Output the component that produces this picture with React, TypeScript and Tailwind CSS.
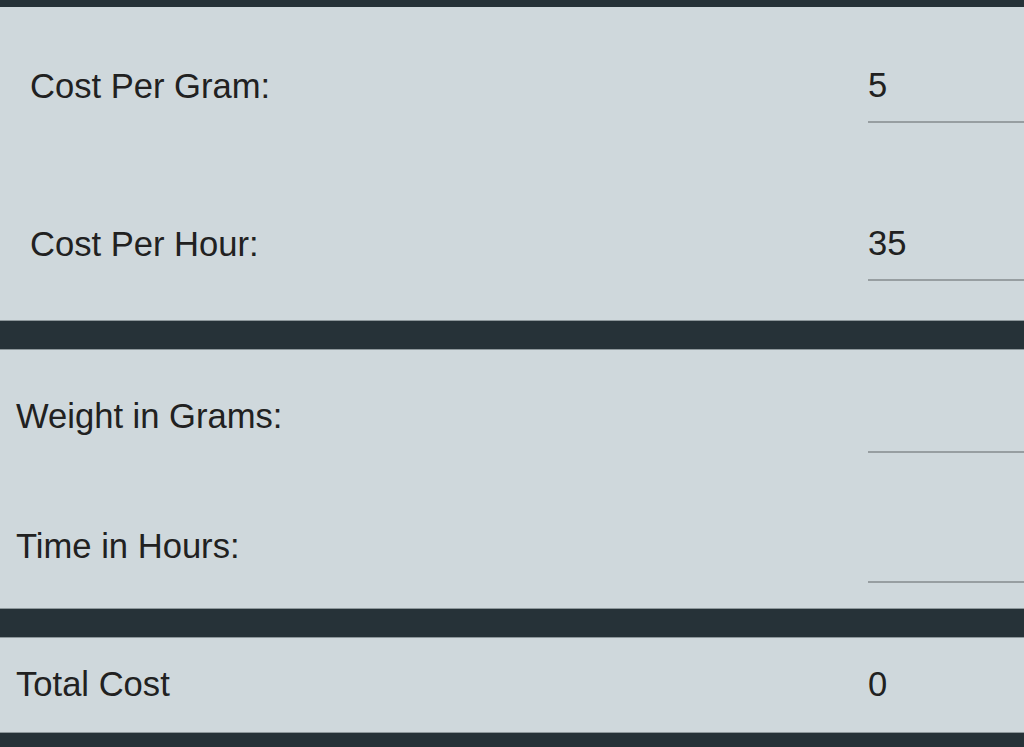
import { useState } from "react";

const Field = ({
  label,
  value,
  onChange,
  indent,
}: {
  label: string;
  value: string;
  onChange: (v: string) => void;
  indent: string;
}) => (
  <div className="flex h-[73px] items-center">
    <label className={`flex-1 ${indent}`}>{label}</label>
    <input
      value={value}
      onChange={(e) => onChange(e.target.value)}
      className="h-[73px] w-[156px] border-b-2 border-[#979ea1] bg-transparent text-[#212121] outline-none"
    />
  </div>
);

export default function App() {
  const [gram, setGram] = useState("5");
  const [hour, setHour] = useState("35");
  const [weight, setWeight] = useState("");
  const [time, setTime] = useState("");

  const total = (Number(gram) || 0) * (Number(weight) || 0) + (Number(hour) || 0) * (Number(time) || 0);

  return (
    <div
      className="min-h-[747px] overflow-hidden bg-[#263238] pt-[7px] pb-[14px] text-[34.6px] text-[#212121]"
      style={{ fontFamily: '"Liberation Sans", Arial, sans-serif' }}
    >
      {/* ajustes */}
      <div className="flex h-[314px] flex-col gap-[85px] border-b border-[#8d979b] bg-[#cfd8dc] pt-[43px]">
        <Field label="Cost Per Gram:" value={gram} onChange={setGram} indent="pl-[30px]" />
        <Field label="Cost Per Hour:" value={hour} onChange={setHour} indent="pl-[30px]" />
      </div>

      {/* trabajo */}
      <div className="mt-[28px] flex h-[260px] flex-col gap-[57px] border-y border-[#8d979b] bg-[#cfd8dc] pt-[30px]">
        <Field label="Weight in Grams:" value={weight} onChange={setWeight} indent="pl-[16px]" />
        <Field label="Time in Hours:" value={time} onChange={setTime} indent="pl-[16px]" />
      </div>

      {/* total */}
      <div className="mt-[28px] flex h-[96px] items-center border-y border-[#8d979b] bg-[#cfd8dc]">
        <span className="flex-1 pl-[16px]">Total Cost</span>
        <span className="w-[156px]">{total}</span>
      </div>
    </div>
  );
}
